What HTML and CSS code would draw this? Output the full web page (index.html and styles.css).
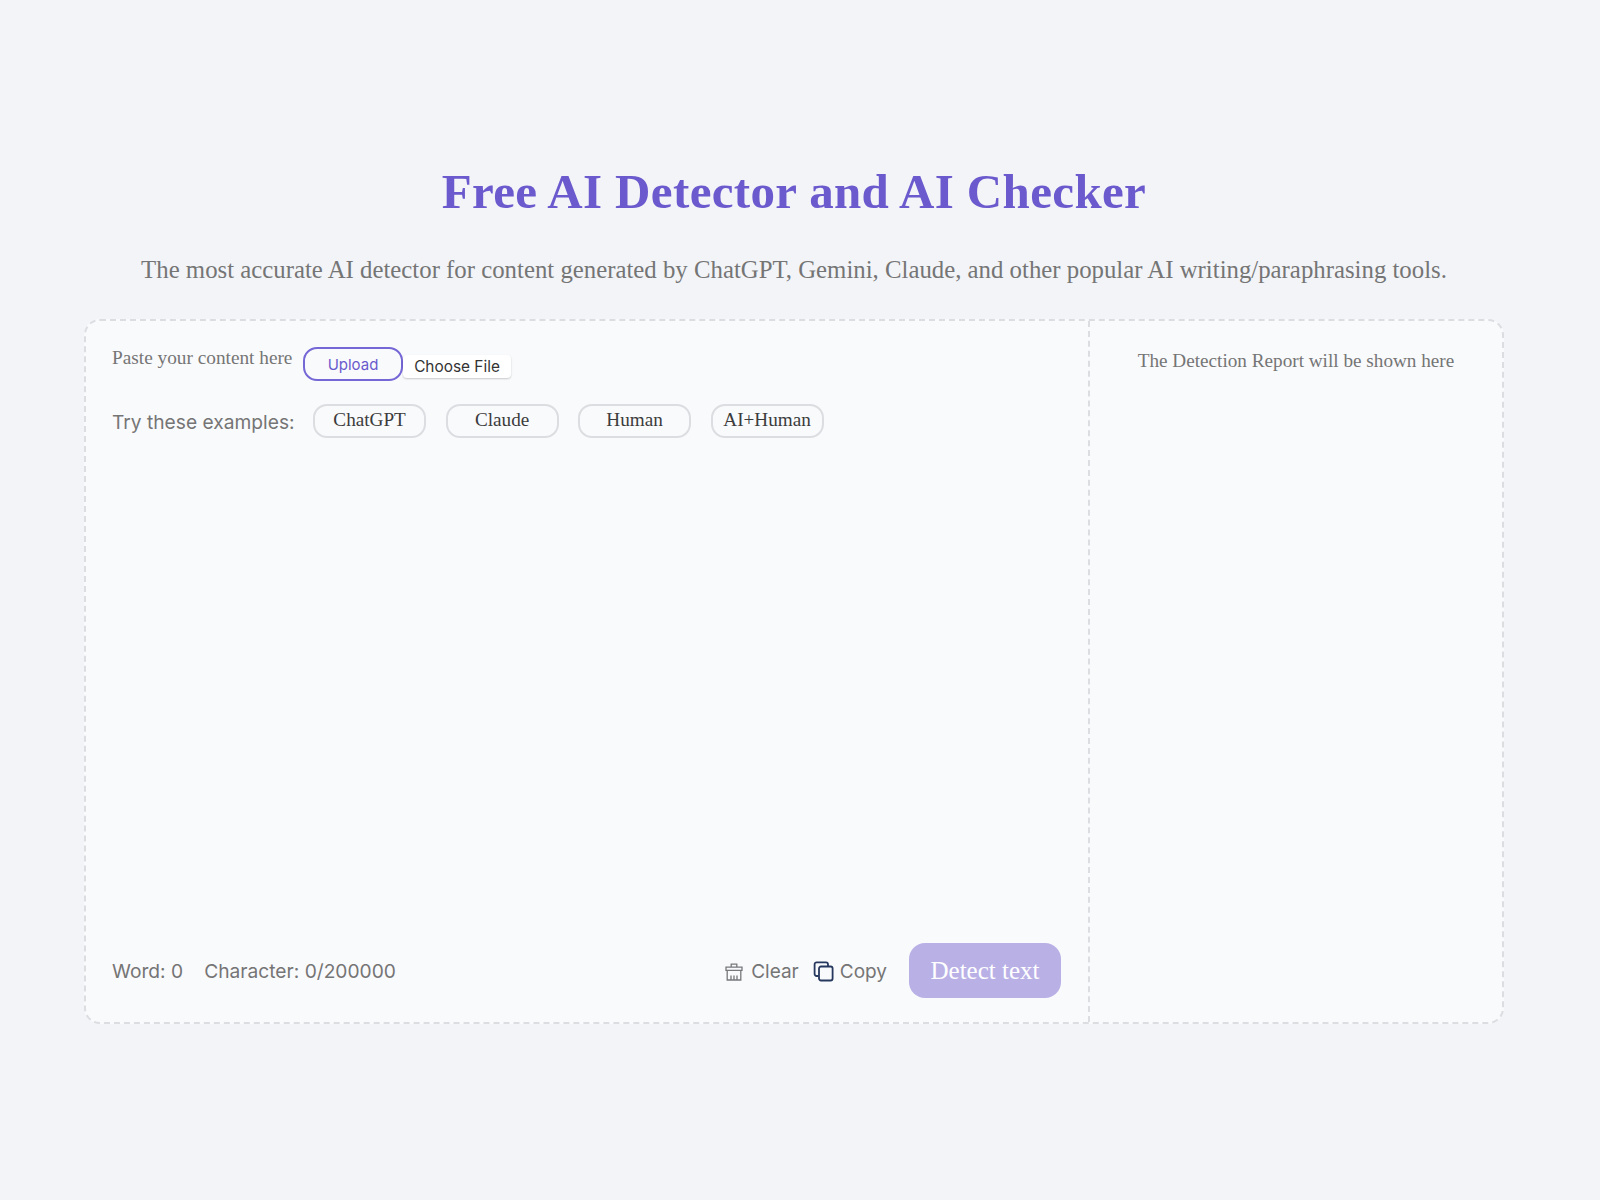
FILE: index.html
```html
<!DOCTYPE html>
<html lang="en">
<head>
    <meta charset="UTF-8">
    <title>Free AI Detector and AI Checker</title>
    <link rel="stylesheet" href="styles.css">
</head>
<body>
    <div class="page">
        <h1 class="title">Free AI Detector and AI Checker</h1>
        <p class="subtitle">The most accurate AI detector for content generated by ChatGPT, Gemini, Claude, and other popular AI writing/paraphrasing tools.</p>
        <div class="panel">
            <div class="editor">
                <div class="upload-row">
                    <span class="paste-label">Paste your content here</span>
                    <button class="upload-btn">Upload</button>
                    <button class="file-btn">Choose File</button>
                </div>
                <div class="examples-row">
                    <span class="examples-label">Try these examples:</span>
                    <button class="example-btn">ChatGPT</button>
                    <button class="example-btn">Claude</button>
                    <button class="example-btn">Human</button>
                    <button class="example-btn">AI+Human</button>
                </div>
                <div class="editor-space"></div>
                <div class="editor-footer">
                    <span class="count">Word: 0</span>
                    <span class="count">Character: 0/200000</span>
                    <div class="actions">
                        <span class="action action-clear">
                            <svg class="icon" width="20" height="20" viewBox="0 0 20 20" fill="none" stroke="#77787b" stroke-width="1.3">
                                <path d="M7.2 5V2.2h5.6V5"/>
                                <path d="M2 5.2h16v3.2H2z"/>
                                <path d="M3.2 8.4v9.6h13.6V8.4"/>
                                <path d="M7 13.4v4.6M10 13.4v4.6M13 13.4v4.6"/>
                            </svg>
                            Clear
                        </span>
                        <span class="action">
                            <svg class="icon" width="21" height="21" viewBox="0 0 21 21" fill="none" stroke="#27385f" stroke-width="1.8">
                                <path d="M5.5 15H3.6A2 2 0 0 1 1.6 13V3.4a2 2 0 0 1 2-2H13a2 2 0 0 1 2 2v1.8"/>
                                <rect x="6" y="5.5" width="13.6" height="14" rx="2"/>
                            </svg>
                            Copy
                        </span>
                    </div>
                    <button class="detect-btn">Detect text</button>
                </div>
            </div>
            <div class="report">
                <p class="report-text">The Detection Report will be shown here</p>
            </div>
        </div>
    </div>
</body>
</html>
```

FILE: styles.css
```css
* {
    margin: 0;
    padding: 0;
    box-sizing: border-box;
}

body {
    background-color: #f2f4f8;
    font-family: "Liberation Serif", serif;
    color: #757575;
}

.page {
    padding: 161px 96px 0 84px;
}

.title {
    color: #6a5acd;
    font-size: 49px;
    font-weight: bold;
    line-height: 62px;
    text-align: center;
    letter-spacing: 0.35px;
}

.subtitle {
    margin-top: 31px;
    font-size: 24.8px;
    line-height: 32px;
    text-align: center;
    white-space: nowrap;
}

.panel {
    display: flex;
    height: 705px;
    margin-top: 33px;
    background-color: #f9fafc;
    border: 2px dashed #dcdde0;
    border-radius: 16px;
}

.editor {
    display: flex;
    flex-direction: column;
    width: 1004px;
    padding: 26px 27px 24px 26px;
    border-right: 2px dashed #dcdde0;
}

.upload-row {
    display: flex;
    align-items: flex-start;
}

.paste-label {
    width: 181px;
    margin-right: 10px;
    font-size: 19.3px;
    line-height: 22px;
    white-space: nowrap;
}

.upload-btn {
    width: 100px;
    height: 34px;
    background: transparent;
    border: 2px solid #7567d6;
    border-radius: 14px;
    color: #6a5acd;
    font-family: "Inter", sans-serif;
    font-size: 15px;
}

.file-btn {
    width: 108px;
    height: 23px;
    margin-top: 8px;
    background-color: #fff;
    border: none;
    border-radius: 4px;
    box-shadow: 0 1px 2px rgba(0, 0, 0, 0.2);
    color: #333;
    font-family: "Inter", sans-serif;
    font-size: 15.4px;
}

.examples-row {
    display: flex;
    align-items: center;
    gap: 19.5px;
    margin-top: 23px;
}

.examples-label {
    margin-right: -1px;
    padding-top: 2px;
    font-family: "Inter", sans-serif;
    font-size: 19.2px;
}

.example-btn {
    width: 113px;
    height: 34px;
    padding-bottom: 3px;
    background: transparent;
    border: 2px solid #dcdde0;
    border-radius: 14px;
    color: #3c3c3c;
    font-family: "Liberation Serif", serif;
    font-size: 19.2px;
}

.editor-space {
    flex: 1;
}

.editor-footer {
    display: flex;
    align-items: center;
    gap: 21px;
    font-family: "Inter", sans-serif;
    font-size: 19px;
}

.count {
    padding-top: 1px;
    font-size: 19.2px;
}

.actions {
    display: flex;
    gap: 14px;
    margin-left: auto;
    padding-top: 2px;
}

.action {
    display: flex;
    align-items: center;
    gap: 6px;
}

.action-clear {
    gap: 7px;
}

.detect-btn {
    width: 152px;
    height: 55px;
    margin-left: 1px;
    background-color: #b9b1e6;
    border: none;
    border-radius: 16px;
    color: #fff;
    font-family: "Liberation Serif", serif;
    font-size: 25px;
}

.report {
    flex: 1;
    padding: 29px 0 0;
}

.report-text {
    font-size: 19.2px;
    line-height: 22px;
    text-align: center;
}
```
